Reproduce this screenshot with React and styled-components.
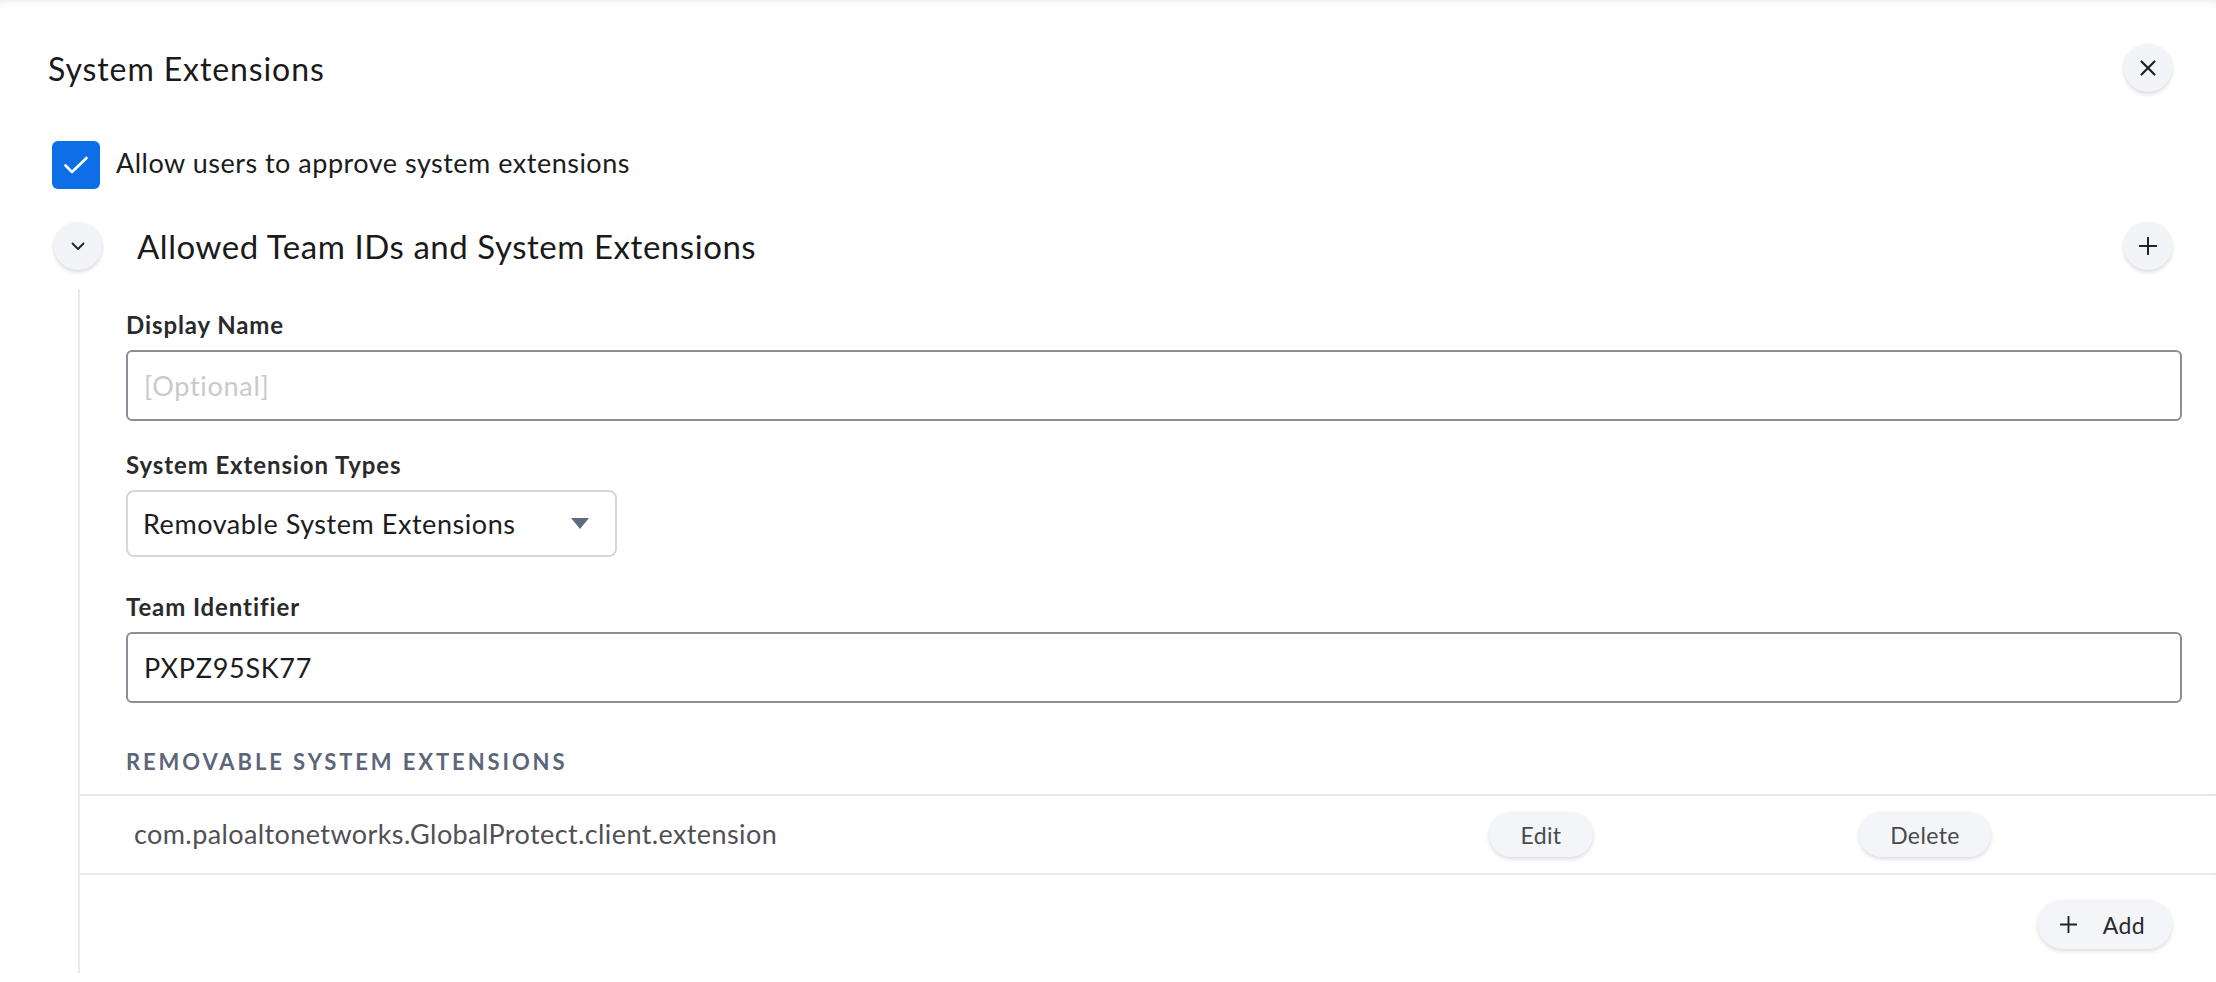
import React, { useState } from 'react';
import styled, { createGlobalStyle } from 'styled-components';

const GlobalStyle = createGlobalStyle`
  html, body {
    margin: 0;
    padding: 0;
    background: #ffffff;
  }
  body {
    font-family: Lato, "Open Sans", "Liberation Sans", sans-serif;
    color: #1c1c1e;
    -webkit-font-smoothing: antialiased;
  }
  * { box-sizing: border-box; }
`;

const Page = styled.div`
  height: 982px;
  padding: 44px 34px 0 48px;
  box-shadow: inset 0 5px 6px -3px rgba(0, 0, 0, 0.07);
  overflow: hidden;
`;

const HeaderRow = styled.div`
  display: flex;
  align-items: center;
  justify-content: space-between;
  padding-right: 10px;
`;

const Title = styled.h1`
  margin: 0;
  font-size: 32px;
  font-weight: 400;
  letter-spacing: 0.9px;
  color: #1a1a1a;
`;

const RoundButton = styled.button`
  width: 48px;
  height: 48px;
  border-radius: 50%;
  border: none;
  padding: 0;
  background: #f3f4f8;
  box-shadow: 0 2px 4px rgba(0, 0, 0, 0.16);
  display: flex;
  align-items: center;
  justify-content: center;
  color: #222;
  cursor: pointer;
  flex-shrink: 0;
`;

const CheckRow = styled.label`
  display: flex;
  align-items: center;
  gap: 16px;
  margin: 49px 0 0 4px;
  cursor: pointer;
`;

const CheckBox = styled.span`
  width: 48px;
  height: 48px;
  border-radius: 6px;
  background: ${props => (props.checked ? '#0d6fe5' : '#fff')};
  border: ${props => (props.checked ? 'none' : '2px solid #8a8d93')};
  display: flex;
  align-items: center;
  justify-content: center;
`;

const CheckLabel = styled.span`
  font-size: 27px;
  letter-spacing: 0.5px;
  color: #1c1c1e;
  padding-bottom: 5px;
`;

const SectionHeader = styled.div`
  display: flex;
  align-items: center;
  margin: 33px 0 0 6px;
  padding-right: 10px;
`;

const SectionTitle = styled.h2`
  flex: 1;
  margin: 0 0 0 35px;
  font-size: 33px;
  font-weight: 400;
  letter-spacing: 0.55px;
  color: #1a1a1a;
`;

const SectionBody = styled.div`
  margin: 19px -34px 0 30px;
  border-left: 2px solid #e9eaec;
  padding: 21px 0 24px 0;
`;

const Fields = styled.div`
  padding: 0 34px 0 46px;
  display: flex;
  flex-direction: column;
`;

const FieldLabel = styled.div`
  font-size: 24px;
  font-weight: 700;
  letter-spacing: 0.9px;
  color: #2a2a2c;
  margin-bottom: 11px;
  margin-top: ${props => props.gap || 0}px;
`;

const TextInput = styled.input`
  width: 100%;
  height: 71px;
  border: 2px solid #8b8e94;
  border-radius: 6px;
  padding: 0 16px;
  font-family: inherit;
  font-size: 27px;
  letter-spacing: 0.7px;
  color: #1c1c1e;
  background: #fff;
  outline: none;

  &::placeholder {
    color: #c9c9cc;
  }
`;

const SelectBox = styled.div`
  width: 491px;
  height: 67px;
  border: 2px solid #d6d7da;
  border-radius: 8px;
  padding: 0 26px 0 15px;
  display: flex;
  align-items: center;
  justify-content: space-between;
  font-size: 27px;
  letter-spacing: 0.55px;
  color: #1c1c1e;
  cursor: pointer;
`;

const Caret = styled.span`
  width: 0;
  height: 0;
  border-left: 9px solid transparent;
  border-right: 9px solid transparent;
  border-top: 11px solid #5e6a7f;
`;

const ListHeading = styled.div`
  margin: 48px 0 0 46px;
  font-size: 22px;
  font-weight: 700;
  letter-spacing: 2.9px;
  text-transform: uppercase;
  color: #5b667a;
  line-height: 1;
`;

const ExtTable = styled.div`
  margin-top: 21px;
  border-top: 2px solid #e8e9eb;
  border-bottom: 2px solid #e8e9eb;
`;

const ExtRow = styled.div`
  display: grid;
  grid-template-columns: 1fr 186px 582px;
  align-items: center;
  height: 77px;
`;

const ExtName = styled.div`
  padding-left: 54px;
  padding-bottom: 3px;
  font-size: 27px;
  letter-spacing: 0.4px;
  color: #505055;
`;

const PillButton = styled.button`
  justify-self: center;
  height: 45px;
  padding: 0 31px;
  border: none;
  border-radius: 23px;
  background: #f4f5f8;
  box-shadow: 0 2px 4px rgba(0, 0, 0, 0.15);
  font-family: inherit;
  font-size: 23px;
  letter-spacing: 0.4px;
  color: #4a4a4e;
  display: inline-flex;
  align-items: center;
  cursor: pointer;
`;

const AddRow = styled.div`
  display: flex;
  justify-content: flex-end;
  padding: 25px 44px 0 0;
`;

const AddButton = styled(PillButton)`
  height: 49px;
  border-radius: 25px;
  padding: 0 27px 0 22px;
  gap: 26px;
  color: #2a2a2c;
`;

const CheckIcon = () => (
  <svg width="30" height="30" viewBox="0 0 30 30" fill="none">
    <path d="M4.5 15.5l6.5 6.5L25.5 8" stroke="#fff" strokeWidth="2.6" strokeLinecap="round" strokeLinejoin="round" />
  </svg>
);

const ChevronDown = () => (
  <svg width="16" height="16" viewBox="0 0 16 16" fill="none">
    <path d="M2.5 5.5L8 11l5.5-5.5" stroke="#222" strokeWidth="1.8" strokeLinecap="round" strokeLinejoin="round" />
  </svg>
);

const CloseIcon = () => (
  <svg width="18" height="18" viewBox="0 0 18 18" fill="none">
    <path d="M2.5 2.5l13 13M15.5 2.5l-13 13" stroke="#222" strokeWidth="2.2" strokeLinecap="round" />
  </svg>
);

const PlusIcon = ({ size = 18 }) => (
  <svg width={size} height={size} viewBox="0 0 18 18" fill="none">
    <path d="M9 0.8v16.4M0.8 9h16.4" stroke="#222" strokeWidth="2" strokeLinecap="round" />
  </svg>
);

const extensions = ['com.paloaltonetworks.GlobalProtect.client.extension'];

const App = () => {
  const [allowUsers, setAllowUsers] = useState(true);
  const [teamId, setTeamId] = useState('PXPZ95SK77');

  return (
    <>
      <GlobalStyle />
      <Page>
        <HeaderRow>
          <Title>System Extensions</Title>
          <RoundButton aria-label="Close">
            <CloseIcon />
          </RoundButton>
        </HeaderRow>

        <CheckRow onClick={() => setAllowUsers(!allowUsers)}>
          <CheckBox checked={allowUsers}>{allowUsers && <CheckIcon />}</CheckBox>
          <CheckLabel>Allow users to approve system extensions</CheckLabel>
        </CheckRow>

        <SectionHeader>
          <RoundButton aria-label="Collapse">
            <ChevronDown />
          </RoundButton>
          <SectionTitle>Allowed Team IDs and System Extensions</SectionTitle>
          <RoundButton aria-label="Add team">
            <PlusIcon />
          </RoundButton>
        </SectionHeader>

        <SectionBody>
          <Fields>
            <FieldLabel>Display Name</FieldLabel>
            <TextInput placeholder="[Optional]" />

            <FieldLabel gap={29}>System Extension Types</FieldLabel>
            <SelectBox>
              Removable System Extensions
              <Caret />
            </SelectBox>

            <FieldLabel gap={35}>Team Identifier</FieldLabel>
            <TextInput value={teamId} onChange={e => setTeamId(e.target.value)} />
          </Fields>

          <ListHeading>Removable System Extensions</ListHeading>
          <ExtTable>
            {extensions.map(ext => (
              <ExtRow key={ext}>
                <ExtName>{ext}</ExtName>
                <PillButton>Edit</PillButton>
                <PillButton>Delete</PillButton>
              </ExtRow>
            ))}
          </ExtTable>

          <AddRow>
            <AddButton>
              <PlusIcon size={17} />
              Add
            </AddButton>
          </AddRow>
        </SectionBody>
      </Page>
    </>
  );
};

export default App;
